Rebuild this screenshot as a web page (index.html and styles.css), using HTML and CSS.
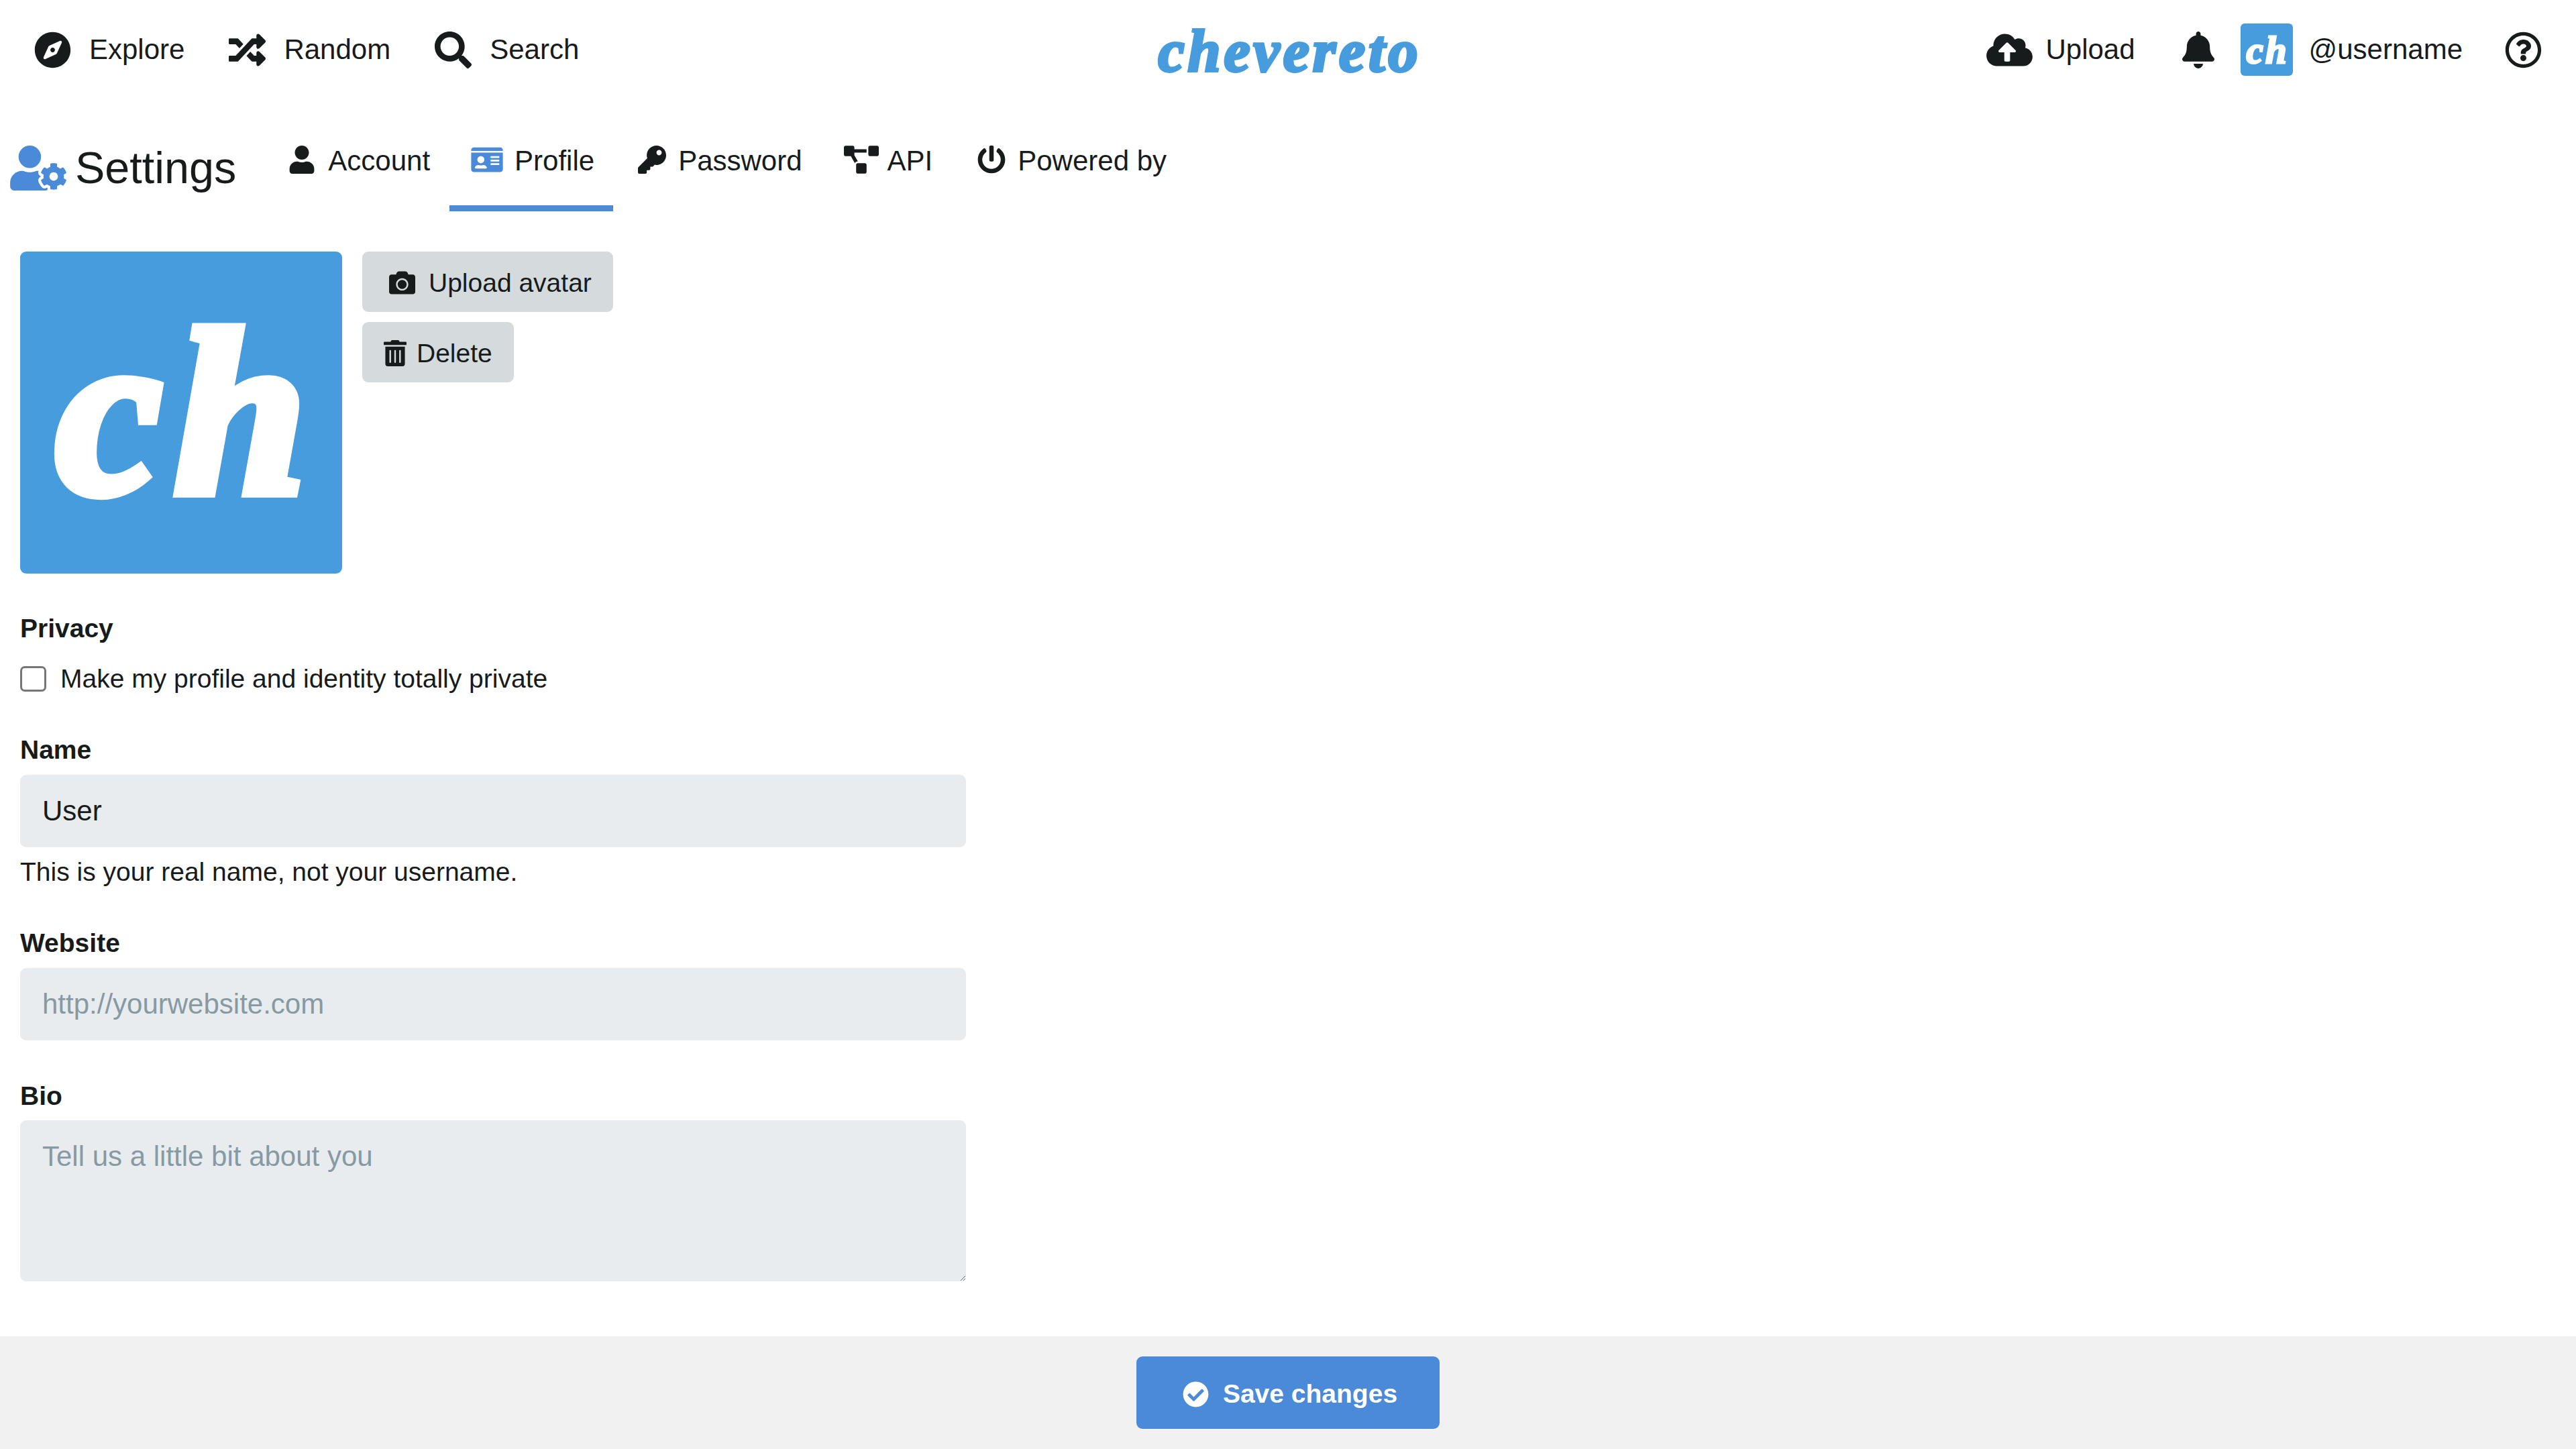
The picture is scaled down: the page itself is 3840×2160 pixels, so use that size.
FILE: index.html
```html
<!DOCTYPE html>
<html lang="en">
<head>
    <meta charset="UTF-8">
    <title>Settings - Chevereto</title>
    <link rel="stylesheet" href="styles.css">
</head>
<body>
    <header class="topbar">
        <nav class="topbar-left">
            <a class="top-link">
                <svg class="icon-top" viewBox="0 0 496 512"><path d="M225.38 233.37c-12.5 12.5-12.5 32.76 0 45.25 12.49 12.5 32.76 12.5 45.25 0 12.5-12.5 12.5-32.76 0-45.25-12.5-12.49-32.76-12.49-45.25 0zM248 8C111.03 8 0 119.03 0 256s111.03 248 248 248 248-111.03 248-248S384.97 8 248 8zm126.14 148.05L308.17 300.4a31.938 31.938 0 0 1-15.77 15.77l-144.34 65.97c-16.65 7.61-33.81-9.55-26.2-26.2l65.98-144.35a31.938 31.938 0 0 1 15.77-15.77l144.34-65.97c16.65-7.6 33.8 9.55 26.19 26.2z"/></svg>
                Explore
            </a>
            <a class="top-link">
                <svg class="icon-top" viewBox="0 0 512 512"><path d="M504.971 359.029c9.373 9.373 9.373 24.569 0 33.941l-80 79.984c-15.01 15.01-40.971 4.49-40.971-16.971V416h-58.785a12.004 12.004 0 0 1-8.773-3.812l-70.556-75.596 53.333-57.143L352 336h32v-39.981c0-21.438 25.943-31.998 40.971-16.971l80 79.981zM12 176h84l52.781 56.551 53.333-57.143-70.556-75.596A11.999 11.999 0 0 0 122.785 96H12c-6.627 0-12 5.373-12 12v56c0 6.627 5.373 12 12 12zm372 0v39.984c0 21.46 25.961 31.98 40.971 16.971l80-79.984c9.373-9.373 9.373-24.569 0-33.941l-80-79.981C409.943 24.021 384 34.582 384 56.019V96h-58.785a12.004 12.004 0 0 0-8.773 3.812L96 336H12c-6.627 0-12 5.373-12 12v56c0 6.627 5.373 12 12 12h110.785c3.326 0 6.503-1.381 8.773-3.812L352 176h32z"/></svg>
                Random
            </a>
            <a class="top-link">
                <svg class="icon-top" viewBox="0 0 512 512"><path d="M505 442.7L405.3 343c-4.5-4.5-10.6-7-17-7H372c27.6-35.3 44-79.7 44-128C416 93.1 322.9 0 208 0S0 93.1 0 208s93.1 208 208 208c48.3 0 92.7-16.4 128-44v16.3c0 6.4 2.5 12.5 7 17l99.7 99.7c9.4 9.4 24.6 9.4 33.9 0l28.3-28.3c9.4-9.4 9.4-24.6.1-34zM208 336c-70.7 0-128-57.2-128-128 0-70.7 57.2-128 128-128 70.7 0 128 57.2 128 128 0 70.7-57.2 128-128 128z"/></svg>
                Search
            </a>
        </nav>
        <div class="logo">chevereto</div>
        <nav class="topbar-right">
            <a class="top-link upload-link">
                <svg class="icon-cloud" viewBox="0 0 640 512"><path d="M537.6 226.6c4.1-10.7 6.4-22.4 6.4-34.6 0-53-43-96-96-96-19.7 0-38.1 6-53.3 16.2C367 64.2 315.3 32 256 32c-88.4 0-160 71.6-160 160 0 2.7.1 5.4.2 8.1C40.2 219.8 0 273.2 0 336c0 79.5 64.5 144 144 144h368c70.7 0 128-57.3 128-128 0-61.9-44-113.6-102.4-125.4zM393.4 288H328v112c0 8.8-7.2 16-16 16h-48c-8.8 0-16-7.2-16-16V288h-65.4c-14.3 0-21.4-17.2-11.3-27.3l105.4-105.4c6.2-6.2 16.4-6.2 22.6 0l105.4 105.4c10.1 10.1 2.9 27.3-11.3 27.3z"/></svg>
                Upload
            </a>
            <svg class="icon-bell" viewBox="0 0 448 512"><path d="M224 512c35.32 0 63.97-28.65 63.97-64H160.03c0 35.35 28.65 64 63.97 64zm215.39-149.71c-19.32-20.76-55.47-51.99-55.47-154.29 0-77.7-54.48-139.9-127.94-155.16V32c0-17.67-14.32-32-31.98-32s-31.98 14.33-31.98 32v20.84C118.56 68.1 64.08 130.3 64.08 208c0 102.3-36.15 133.53-55.47 154.29-6 6.45-8.66 14.16-8.61 21.71.11 16.4 12.98 32 32.1 32h383.8c19.12 0 32-15.6 32.1-32 .05-7.55-2.61-15.27-8.61-21.71z"/></svg>
            <div class="avatar avatar-small">ch</div>
            <span class="username">@username</span>
            <svg class="icon-top icon-help" viewBox="0 0 512 512"><path d="M256 8C119.043 8 8 119.083 8 256c0 136.997 111.043 248 248 248s248-111.003 248-248C504 119.083 392.957 8 256 8zm0 448c-110.532 0-200-89.431-200-200 0-110.495 89.472-200 200-200 110.491 0 200 89.471 200 200 0 110.53-89.431 200-200 200zm107.244-255.2c0 67.052-72.421 68.084-72.421 92.863V300c0 6.627-5.373 12-12 12h-45.647c-6.627 0-12-5.373-12-12v-8.659c0-35.745 27.1-50.034 47.579-61.516 17.561-9.845 28.324-16.541 28.324-29.579 0-17.246-21.999-28.693-39.784-28.693-23.189 0-33.894 10.977-48.942 29.969-4.057 5.12-11.46 6.071-16.666 2.124l-27.824-21.098c-5.107-3.872-6.251-11.066-2.644-16.363C184.846 131.491 214.94 112 261.794 112c49.071 0 101.45 38.304 101.45 88.8zM298 368c0 23.159-18.841 42-42 42s-42-18.841-42-42 18.841-42 42-42 42 18.841 42 42z"/></svg>
        </nav>
    </header>

    <div class="tabbar">
        <h1 class="page-title">
            <svg class="icon-title" viewBox="0 0 640 512"><path d="M610.5 373.3c2.6-14.1 2.6-28.5 0-42.6l25.8-14.9c3-1.7 4.3-5.2 3.3-8.5-6.7-21.6-18.2-41.2-33.2-57.4-2.3-2.5-6-3.1-9-1.4l-25.8 14.9c-10.9-9.3-23.4-16.5-36.9-21.3v-29.8c0-3.4-2.4-6.4-5.7-7.1-22.3-5-45-4.8-66.2 0-3.3.7-5.7 3.7-5.7 7.1v29.8c-13.5 4.8-26 12-36.9 21.3l-25.8-14.9c-2.9-1.7-6.7-1.1-9 1.4-15 16.2-26.5 35.8-33.2 57.4-1 3.3.4 6.8 3.3 8.5l25.8 14.9c-2.6 14.1-2.6 28.5 0 42.6l-25.8 14.9c-3 1.7-4.3 5.2-3.3 8.5 6.7 21.6 18.2 41.1 33.2 57.4 2.3 2.5 6 3.1 9 1.4l25.8-14.9c10.9 9.3 23.4 16.5 36.9 21.3v29.8c0 3.4 2.4 6.4 5.7 7.1 22.3 5 45 4.8 66.2 0 3.3-.7 5.7-3.7 5.7-7.1v-29.8c13.5-4.8 26-12 36.9-21.3l25.8 14.9c2.9 1.7 6.7 1.1 9-1.4 15-16.2 26.5-35.8 33.2-57.4 1-3.3-.4-6.8-3.3-8.5l-25.8-14.9zM496 400.5c-26.8 0-48.5-21.8-48.5-48.5s21.8-48.5 48.5-48.5 48.5 21.8 48.5 48.5-21.7 48.5-48.5 48.5zM224 256c70.7 0 128-57.3 128-128S294.7 0 224 0 96 57.3 96 128s57.3 128 128 128zm201.2 226.5c-2.3-1.2-4.6-2.6-6.8-3.9l-7.9 4.6c-6 3.4-12.8 5.3-19.6 5.3-10.9 0-21.4-4.6-28.9-12.6-18.3-19.8-32.3-43.9-40.2-69.6-5.5-17.7 1.9-36.4 17.9-45.7l7.9-4.6c-.1-2.6-.1-5.2 0-7.8l-7.9-4.6c-16-9.2-23.4-28-17.9-45.7.9-2.9 2.2-5.8 3.2-8.7-3.8-.3-7.5-1.2-11.4-1.2h-16.7c-22.2 10.2-46.9 16-72.9 16s-50.6-5.8-72.9-16h-16.7C60.2 288 0 348.2 0 422.4V464c0 26.5 21.5 48 48 48h352c10.1 0 19.5-3.2 27.2-8.5-1.2-3.8-2-7.7-2-11.8v-9.2z"/></svg>
            Settings
        </h1>
        <nav class="tabs">
            <a class="tab tab-first">
                <svg class="icon-tab" viewBox="0 0 448 512"><path d="M224 256c70.7 0 128-57.3 128-128S294.7 0 224 0 96 57.3 96 128s57.3 128 128 128zm89.6 32h-16.7c-22.2 10.2-46.9 16-72.9 16s-50.6-5.8-72.9-16h-16.7C60.2 288 0 348.2 0 422.4V464c0 26.5 21.5 48 48 48h352c26.5 0 48-21.5 48-48v-41.6c0-74.2-60.2-134.4-134.4-134.4z"/></svg>
                Account
            </a>
            <a class="tab tab-active">
                <svg class="icon-tab icon-accent" viewBox="0 0 576 512"><path d="M528 32H48C21.5 32 0 53.5 0 80v16h576V80c0-26.5-21.5-48-48-48zM0 432c0 26.5 21.5 48 48 48h480c26.5 0 48-21.5 48-48V128H0v304zm352-232c0-4.4 3.6-8 8-8h144c4.4 0 8 3.6 8 8v16c0 4.4-3.6 8-8 8H360c-4.4 0-8-3.6-8-8v-16zm0 64c0-4.4 3.6-8 8-8h144c4.4 0 8 3.6 8 8v16c0 4.4-3.6 8-8 8H360c-4.4 0-8-3.6-8-8v-16zm0 64c0-4.4 3.6-8 8-8h144c4.4 0 8 3.6 8 8v16c0 4.4-3.6 8-8 8H360c-4.4 0-8-3.6-8-8v-16zM176 192c35.3 0 64 28.7 64 64s-28.7 64-64 64-64-28.7-64-64 28.7-64 64-64zM67.1 396.2C75.5 370.5 99.6 352 128 352h8.2c12.3 5.1 25.7 8 39.8 8s27.6-2.9 39.8-8h8.2c28.4 0 52.5 18.5 60.9 44.2 3.2 9.9-5.2 19.8-15.6 19.8H82.7c-10.4 0-18.8-10-15.6-19.8z"/></svg>
                Profile
            </a>
            <a class="tab">
                <svg class="icon-tab" viewBox="0 0 512 512"><path d="M512 176.001C512 273.203 433.202 352 336 352c-11.22 0-22.19-1.062-32.827-3.069l-24.012 27.014A23.999 23.999 0 0 1 261.223 384H224v40c0 13.255-10.745 24-24 24h-40v40c0 13.255-10.745 24-24 24H24c-13.255 0-24-10.745-24-24v-78.059c0-6.365 2.529-12.47 7.029-16.971l161.802-161.802C163.108 213.814 160 195.271 160 176 160 78.798 238.797.001 335.999 0 433.488-.001 512 78.511 512 176.001zM336 128c0 26.51 21.49 48 48 48s48-21.49 48-48-21.49-48-48-48-48 21.49-48 48z"/></svg>
                Password
            </a>
            <a class="tab">
                <svg class="icon-tab" viewBox="0 0 640 512"><path d="M384 320H256c-17.67 0-32 14.33-32 32v128c0 17.67 14.33 32 32 32h128c17.67 0 32-14.33 32-32V352c0-17.67-14.33-32-32-32zM192 32c0-17.67-14.33-32-32-32H32C14.33 0 0 14.33 0 32v128c0 17.67 14.33 32 32 32h95.72l73.16 128.04C211.98 300.98 232.4 288 256 288h.28L192 175.51V128h224V64H192V32zM608 0H480c-17.67 0-32 14.33-32 32v128c0 17.67 14.33 32 32 32h128c17.67 0 32-14.33 32-32V32c0-17.67-14.33-32-32-32z"/></svg>
                API
            </a>
            <a class="tab">
                <svg class="icon-tab" viewBox="0 0 512 512"><path d="M400 54.1c63 45 104 118.6 104 201.9 0 136.8-110.8 247.7-247.5 248C120 504.3 8.2 393 8 256.4 7.9 173.1 48.9 99.3 111.8 54.2c11.7-8.3 28-4.8 35 7.7L162.6 90c5.9 10.5 3.1 23.8-6.6 31-41.5 30.8-68 79.6-68 134.9-.1 92.3 74.5 168.1 168 168.1 91.6 0 168.6-74.2 168-169.1-.3-51.8-24.7-101.8-68.1-134-9.7-7.2-12.4-20.5-6.5-30.9l15.8-28.1c7-12.4 23.2-16.1 34.8-7.8zM296 264V24c0-13.3-10.7-24-24-24h-32c-13.3 0-24 10.7-24 24v240c0 13.3 10.7 24 24 24h32c13.3 0 24-10.7 24-24z"/></svg>
                Powered by
            </a>
        </nav>
    </div>

    <main class="content">
        <div class="avatar-row">
            <div class="avatar avatar-large">ch</div>
            <div class="avatar-actions">
                <button class="btn btn-upload" type="button">
                    <svg class="icon-btn" viewBox="0 0 512 512"><path d="M512 144v288c0 26.5-21.5 48-48 48H48c-26.5 0-48-21.5-48-48V144c0-26.5 21.5-48 48-48h88l12.3-32.9c7-18.7 24.9-31.1 44.9-31.1h125.5c20 0 37.9 12.4 44.9 31.1L376 96h88c26.5 0 48 21.5 48 48zM376 288c0-66.2-53.8-120-120-120s-120 53.8-120 120 53.8 120 120 120 120-53.8 120-120zm-32 0c0 48.5-39.5 88-88 88s-88-39.5-88-88 39.5-88 88-88 88 39.5 88 88z"/></svg>
                    Upload avatar
                </button>
                <button class="btn btn-delete" type="button">
                    <svg class="icon-btn icon-trash" viewBox="0 0 448 512"><path d="M32 464a48 48 0 0 0 48 48h288a48 48 0 0 0 48-48V128H32zm272-256a16 16 0 0 1 32 0v224a16 16 0 0 1-32 0zm-96 0a16 16 0 0 1 32 0v224a16 16 0 0 1-32 0zm-96 0a16 16 0 0 1 32 0v224a16 16 0 0 1-32 0zM432 32H312l-9.4-18.7A24 24 0 0 0 281.1 0H166.8a23.72 23.72 0 0 0-21.4 13.3L136 32H16A16 16 0 0 0 0 48v32a16 16 0 0 0 16 16h416a16 16 0 0 0 16-16V48a16 16 0 0 0-16-16z"/></svg>
                    Delete
                </button>
            </div>
        </div>

        <div class="field field-privacy">
            <div class="field-label">Privacy</div>
            <label class="check-row">
                <input class="check" type="checkbox">
                Make my profile and identity totally private
            </label>
        </div>

        <div class="field field-tight">
            <label class="field-label" for="name">Name</label>
            <input class="text-input" id="name" type="text" value="User">
            <div class="field-help">This is your real name, not your username.</div>
        </div>

        <div class="field field-tight">
            <label class="field-label" for="website">Website</label>
            <input class="text-input" id="website" type="text" placeholder="http://yourwebsite.com">
        </div>

        <div class="field field-bio">
            <label class="field-label" for="bio">Bio</label>
            <textarea class="text-input text-area" id="bio" placeholder="Tell us a little bit about you"></textarea>
        </div>
    </main>

    <footer class="actions">
        <button class="btn-save" type="button">
            <svg class="icon-btn" viewBox="0 0 512 512"><path d="M504 256c0 136.967-111.033 248-248 248S8 392.967 8 256 119.033 8 256 8s248 111.033 248 248zM227.314 387.314l184-184c6.248-6.248 6.248-16.379 0-22.627l-22.627-22.627c-6.248-6.249-16.379-6.249-22.628 0L216 308.118l-70.059-70.059c-6.248-6.248-16.379-6.248-22.628 0l-22.627 22.627c-6.248 6.248-6.248 16.379 0 22.627l104 104c6.249 6.249 16.379 6.249 22.628.001z"/></svg>
            Save changes
        </button>
    </footer>
</body>
</html>
```

FILE: styles.css
```css
* {
    box-sizing: border-box;
}
body {
    margin: 0;
    min-height: 100vh;
    display: flex;
    flex-direction: column;
    background: #FFFFFF;
    color: #171B1C;
    font-family: "Liberation Sans", Arial, sans-serif;
    font-size: 39px;
    line-height: 54px;
}
svg {
    display: block;
    flex: none;
    fill: currentColor;
}

/* top bar */
.topbar {
    height: 148px;
    padding: 0 51px;
    display: grid;
    grid-template-columns: 1fr auto 1fr;
    align-items: center;
    font-size: 42px;
}
.topbar-left {
    display: flex;
    align-items: center;
    gap: 66px;
}
.topbar-right {
    display: flex;
    align-items: center;
    justify-content: flex-end;
}
.top-link {
    display: flex;
    align-items: center;
    gap: 27px;
}
.icon-top {
    width: 55px;
    height: 55px;
}
.logo {
    padding: 6px 0 0 5px;
    color: #469CDD;
    font-family: "Liberation Serif", serif;
    font-size: 88px;
    font-style: italic;
    font-weight: 700;
    letter-spacing: 5px;
    line-height: 100px;
    -webkit-text-stroke: 4px #469CDD;
}
.upload-link {
    gap: 19px;
}
.icon-cloud {
    width: 69px;
    height: 55px;
}
.icon-bell {
    width: 48px;
    height: 55px;
    margin-left: 70px;
}
.avatar {
    display: flex;
    align-items: center;
    justify-content: center;
    padding-left: 0.06em;
    overflow: hidden;
    background: #469CDD;
    color: #FFFFFF;
    font-family: "Liberation Serif", serif;
    font-style: italic;
    font-weight: 700;
    letter-spacing: 0.06em;
    line-height: 1;
    -webkit-text-stroke: 0.05em #FFFFFF;
}
.avatar-small {
    width: 78px;
    height: 78px;
    margin-left: 39px;
    border-radius: 6px;
    font-size: 57px;
}
.username {
    margin-left: 24px;
}
.icon-help {
    margin-left: 63px;
}

/* settings title and tabs */
.tabbar {
    height: 167px;
    padding: 23px 0 0 15px;
    display: flex;
    align-items: flex-start;
}
.page-title {
    margin: 39px 42px 0 0;
    display: flex;
    align-items: center;
    gap: 13px;
    font-size: 66.5px;
    font-weight: 400;
    line-height: 80px;
}
.icon-title {
    width: 84px;
    height: 67px;
    color: #4A8AD8;
}
.tabs {
    display: flex;
    gap: 2px;
    height: 144px;
    font-size: 42px;
}
.tab {
    padding: 39px 30px 0;
    display: flex;
    align-items: flex-start;
    gap: 13px;
    line-height: 60px;
}
.tab-first {
    padding-right: 27px;
}
.tab-active {
    padding-right: 28px;
    gap: 15px;
    border-bottom: 9px solid #4A8AD8;
}
.icon-tab {
    width: 52px;
    height: 42px;
    margin-top: 7px;
}
.icon-accent {
    color: #4A8AD8;
}

/* form */
.content {
    flex: 1;
    padding: 60px 30px 0;
}
.avatar-row {
    display: flex;
    gap: 30px;
}
.avatar-large {
    width: 480px;
    height: 480px;
    border-radius: 9px;
    font-size: 350px;
}
.avatar-actions {
    display: flex;
    flex-direction: column;
    align-items: flex-start;
    gap: 15px;
}
.btn {
    height: 90px;
    padding-top: 4px;
    display: flex;
    align-items: center;
    border: none;
    border-radius: 9px;
    background: #D5DBDD;
    color: inherit;
    font: inherit;
}
.btn-upload {
    padding-left: 40px;
    padding-right: 32px;
    gap: 20px;
}
.btn-delete {
    padding-left: 32px;
    padding-right: 32px;
    gap: 15px;
}
.icon-btn {
    width: 39px;
    height: 39px;
}
.icon-trash {
    width: 34px;
}
.field {
    width: 1410px;
}
.field-privacy {
    margin-top: 55px;
}
.field-tight {
    margin-top: 52px;
}
.field-bio {
    margin-top: 56px;
}
.field-label {
    display: block;
    margin-bottom: 10px;
    font-weight: 700;
}
.field-bio .field-label {
    margin-bottom: 9px;
}
.check-row {
    display: flex;
    align-items: center;
    gap: 21px;
    margin-top: 21px;
}
.check {
    appearance: none;
    width: 39px;
    height: 38px;
    margin: 0;
    border: 3px solid #767676;
    border-radius: 7px;
    background: #FFFFFF;
}
.text-input {
    display: block;
    width: 100%;
    height: 108px;
    padding: 0 33px;
    border: none;
    border-radius: 9px;
    background: #E9ECEF;
    color: inherit;
    font-family: inherit;
    font-size: 42px;
}
.text-input::placeholder {
    color: #869AA3;
    opacity: 1;
}
.text-area {
    height: 240px;
    padding-top: 24px;
    line-height: 59px;
    resize: vertical;
}
.field-help {
    margin-top: 10px;
}

/* bottom bar */
.actions {
    height: 168px;
    display: flex;
    align-items: center;
    justify-content: center;
    background: #F1F1F1;
}
.btn-save {
    width: 452px;
    height: 108px;
    padding: 4px 0 0 6px;
    display: flex;
    align-items: center;
    justify-content: center;
    gap: 21px;
    border: none;
    border-radius: 9px;
    background: #4A8AD8;
    color: #FFFFFF;
    font: inherit;
    font-weight: 700;
}
```
